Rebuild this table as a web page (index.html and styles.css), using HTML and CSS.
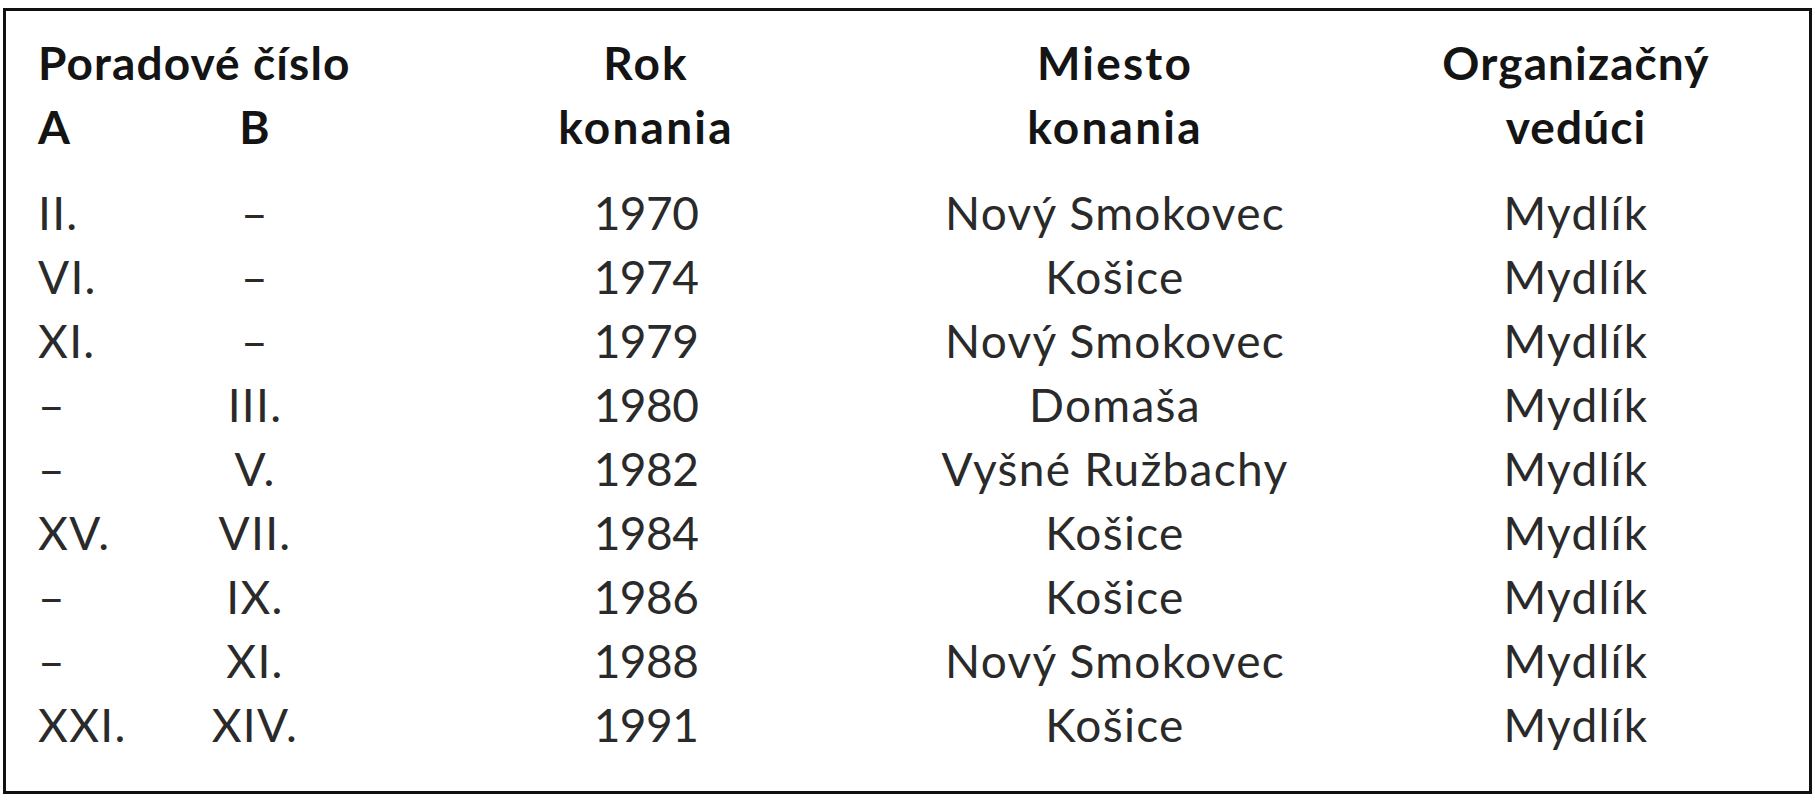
FILE: index.html
```html
<!DOCTYPE html>
<html lang="sk">
<head>
<meta charset="utf-8">
<title>Tabuľka</title>
<link rel="stylesheet" href="styles.css">
</head>
<body>
<div class="frame">
  <div class="head">
    <div class="c-ab h1">Poradové číslo</div>
    <div class="c-a h2">A</div>
    <div class="c-b h2">B</div>
    <div class="c-rok hs">Rok<br>konania</div>
    <div class="c-miesto hs">Miesto<br>konania</div>
    <div class="c-org hs">Organizačný<br>vedúci</div>
  </div>
  <div class="body">
    <div class="row"><div class="c-a">II.</div><div class="c-b">–</div><div class="c-rok num">1970</div><div class="c-miesto">Nový Smokovec</div><div class="c-org">Mydlík</div></div>
    <div class="row"><div class="c-a">VI.</div><div class="c-b">–</div><div class="c-rok num">1974</div><div class="c-miesto">Košice</div><div class="c-org">Mydlík</div></div>
    <div class="row"><div class="c-a">XI.</div><div class="c-b">–</div><div class="c-rok num">1979</div><div class="c-miesto">Nový Smokovec</div><div class="c-org">Mydlík</div></div>
    <div class="row"><div class="c-a">–</div><div class="c-b">III.</div><div class="c-rok num">1980</div><div class="c-miesto">Domaša</div><div class="c-org">Mydlík</div></div>
    <div class="row"><div class="c-a">–</div><div class="c-b">V.</div><div class="c-rok num">1982</div><div class="c-miesto">Vyšné Ružbachy</div><div class="c-org">Mydlík</div></div>
    <div class="row"><div class="c-a">XV.</div><div class="c-b">VII.</div><div class="c-rok num">1984</div><div class="c-miesto">Košice</div><div class="c-org">Mydlík</div></div>
    <div class="row"><div class="c-a">–</div><div class="c-b">IX.</div><div class="c-rok num">1986</div><div class="c-miesto">Košice</div><div class="c-org">Mydlík</div></div>
    <div class="row"><div class="c-a">–</div><div class="c-b">XI.</div><div class="c-rok num">1988</div><div class="c-miesto">Nový Smokovec</div><div class="c-org">Mydlík</div></div>
    <div class="row"><div class="c-a">XXI.</div><div class="c-b">XIV.</div><div class="c-rok num">1991</div><div class="c-miesto">Košice</div><div class="c-org">Mydlík</div></div>
  </div>
</div>
</body>
</html>
```
FILE: styles.css
```css
html, body {
  margin: 0;
  padding: 0;
  background: #ffffff;
}
body {
  padding: 8px 3px 6px 3px;
  font-family: "Lato", "Open Sans", sans-serif;
  color: #2a2a2a;
}
.frame {
  width: 1809px;
  height: 786px;
  border: 3px solid #111111;
  box-sizing: border-box;
  padding: 20px 0 0 32px;
}
.head, .row {
  display: grid;
  grid-template-columns:
    [a] 140px [b] 154px 214px [rok] 200px 179px [miesto] 380px 111px [org] 320px;
  font-size: 46px;
  line-height: 64px;
  letter-spacing: 1.3px;
}
.head {
  grid-template-rows: 64px 64px;
  font-weight: 700;
  color: #141414;
  margin-bottom: 22px;
  letter-spacing: 1.1px;
}
.c-a { grid-column: a; text-align: left; }
.c-b { grid-column: b; text-align: center; }
.c-ab { grid-column: a / span 2; text-align: left; white-space: nowrap; }
.c-rok { grid-column: rok; text-align: center; white-space: nowrap; }
.c-miesto { grid-column: miesto; text-align: center; white-space: nowrap; }
.c-org { grid-column: org; text-align: center; white-space: nowrap; }
.h1 { grid-row: 1; }
.h2 { grid-row: 2; }
.hs { grid-row: 1 / span 2; }
.c-rok.hs, .c-miesto.hs { letter-spacing: 2.2px; }
.num { letter-spacing: -0.5px; }
```
